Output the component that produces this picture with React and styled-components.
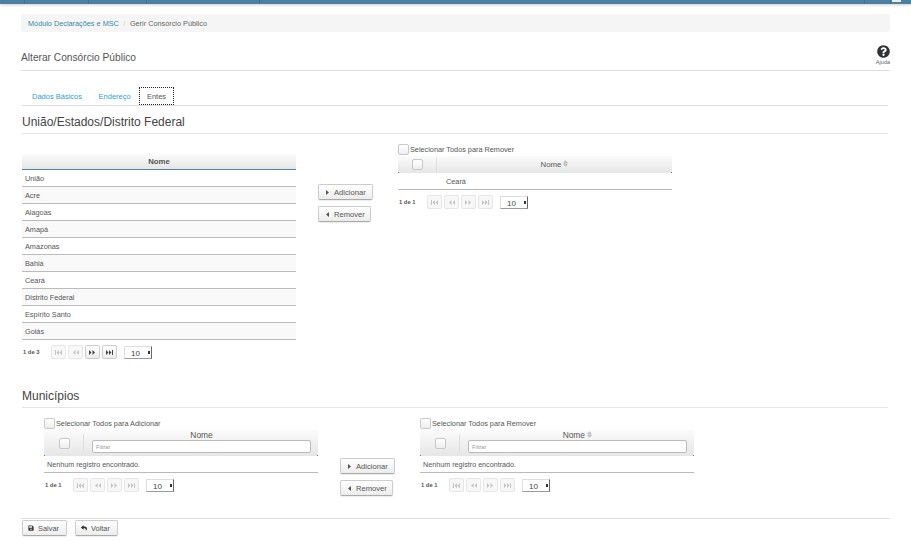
import styled, { createGlobalStyle } from 'styled-components'
import { FaQuestionCircle, FaSave, FaReply } from 'react-icons/fa'

const GlobalStyle = createGlobalStyle`
  html, body { margin:0; padding:0; background:#fff; }
  body { font-family:"Liberation Sans", Arial, sans-serif; color:#555; }
`

const ESTADOS = ['União','Acre','Alagoas','Amapá','Amazonas','Bahia','Ceará','Distrito Federal','Espírito Santo','Goiás']
const BAR_SEGMENTS = [25, 64, 58, 113, 605, 26]

const PagerIcon = ({ kind }) => {
  const paths = {
    first: 'M0 0h1v5H0zM4 0v5L1.5 2.5zM7 0v5L4.5 2.5z',
    prev: 'M3.5 0v5L1 2.5zM7 0v5L4.5 2.5z',
    next: 'M0 0v5l2.5-2.5zM3.5 0v5L6 2.5z',
    last: 'M0 0v5l2.5-2.5zM3 0v5l2.5-2.5zM6 0h1v5H6z',
  }
  return (
    <svg width="7" height="5" viewBox="0 0 7 5" fill="currentColor">
      <path d={paths[kind]} />
    </svg>
  )
}

const Pager = ({ label, active }) => (
  <PagerRow>
    <PageLabel>{label}</PageLabel>
    <PageBtns>
      <PageBtn><PagerIcon kind="first" /></PageBtn>
      <PageBtn><PagerIcon kind="prev" /></PageBtn>
      <PageBtn $active={active}><PagerIcon kind="next" /></PageBtn>
      <PageBtn $active={active}><PagerIcon kind="last" /></PageBtn>
    </PageBtns>
    <PageSize>10<Spinner /></PageSize>
  </PagerRow>
)

const Triangle = ({ left }) => (
  <Arrow width="3" height="5" viewBox="0 0 3 5" fill="#555">
    <path d={left ? 'M3 0v5L0 2.5z' : 'M0 0v5l3-2.5z'} />
  </Arrow>
)

const Actions = () => (
  <ActionCol>
    <ActionBtn $w={55}><Triangle />Adicionar</ActionBtn>
    <ActionBtn $w={53}><Triangle left />Remover</ActionBtn>
  </ActionCol>
)

const SortIcon = () => (
  <svg width="5" height="7" viewBox="0 0 5 7" fill="none" stroke="#999" strokeWidth="0.7">
    <path d="M.8 2.8L2.5.8l1.7 2zM.8 4.2l1.7 2 1.7-2z" />
  </svg>
)

const FilterTable = ({ selectLabel, sortable }) => (
  <Side $top={9}>
    <SelectAll><Check />{selectLabel}</SelectAll>
    <HeadRow $tall>
      <CheckCell $wide><Check /></CheckCell>
      <FilterCell>
        <HeadTitle $spaced>Nome {sortable && <SortIcon />}</HeadTitle>
        <FilterInput placeholder="Filtrar" />
      </FilterCell>
    </HeadRow>
    <EmptyRow>Nenhum registro encontrado.</EmptyRow>
    <Pager label="1 de 1" />
  </Side>
)

function App() {
  return (
    <Page>
      <GlobalStyle />
      <TopBar>
        {BAR_SEGMENTS.map((w, i) => <BarSegment key={i} $w={w} />)}
        <BarMark />
      </TopBar>
      <Breadcrumb>
        <a>Módulo Declarações e MSC</a>
        <Slash>/</Slash>
        <span>Gerir Consórcio Público</span>
      </Breadcrumb>

      <TitleBar>
        <h1>Alterar Consórcio Público</h1>
        <Help>
          <FaQuestionCircle size={13} color="#2f3338" />
          <span>Ajuda</span>
        </Help>
      </TitleBar>

      <Tabs>
        <Tab>Dados Básicos</Tab>
        <Tab>Endereço</Tab>
        <Tab $active>Entes</Tab>
      </Tabs>

      <SectionTitle>União/Estados/Distrito Federal</SectionTitle>
      <TransferRow>
        <Side $top={20}>
          <HeadRow $center>Nome</HeadRow>
          {ESTADOS.map((nome, i) => (
            <DataRow key={nome} $odd={i % 2 === 0}>{nome}</DataRow>
          ))}
          <Pager label="1 de 3" active />
        </Side>
        <ActionSlot><Actions /></ActionSlot>
        <Side $top={9}>
          <SelectAll><Check />Selecionar Todos para Remover</SelectAll>
          <HeadRow>
            <CheckCell><Check /></CheckCell>
            <HeadTitle>Nome <SortIcon /></HeadTitle>
          </HeadRow>
          <PickedRow>Ceará</PickedRow>
          <Pager label="1 de 1" />
        </Side>
      </TransferRow>

      <SectionTitle $second>Municípios</SectionTitle>
      <TransferRow $indent>
        <FilterTable selectLabel="Selecionar Todos para Adicionar" />
        <ActionSlot><Actions /></ActionSlot>
        <FilterTable selectLabel="Selecionar Todos para Remover" sortable />
      </TransferRow>

      <Footer>
        <FooterBtn $w={45}><FaSave size={6} color="#333" />Salvar</FooterBtn>
        <FooterBtn $w={43}><FaReply size={6} color="#333" />Voltar</FooterBtn>
      </Footer>
    </Page>
  )
}

export default App

const Page = styled.div`
  width:911px;
  height:556px;
  overflow:hidden;
`
const TopBar = styled.div`
  position:relative;
  height:4px;
  display:flex;
  background:#4a80a0;
  box-shadow:0 1px 3px rgba(0,0,0,.2);
`
const BarSegment = styled.span`
  width:${p => p.$w}px;
  border-right:1px solid #3f7091;
  box-sizing:border-box;
`
const BarMark = styled.span`
  position:absolute;
  right:10px;
  top:0;
  width:9px;
  height:2px;
  background:#e8eef2;
`
const Breadcrumb = styled.nav`
  margin:10px 21px 0;
  height:18px;
  width:869px;
  padding-left:7px;
  box-sizing:border-box;
  display:flex;
  align-items:center;
  background:#f5f5f5;
  border-radius:3px;
  font-size:7.3px;
  color:#666;
  a { color:#3a87ad; }
`
const Slash = styled.span`
  margin:0 4.5px;
  color:#ccc;
`
const TitleBar = styled.header`
  margin:12px 21px 0;
  width:869px;
  height:26px;
  border-bottom:1px solid #ddd;
  display:flex;
  justify-content:space-between;
  align-items:flex-start;
  h1 {
    margin:8px 0 0;
    font-size:10.2px;
    line-height:12px;
    font-weight:normal;
    color:#555;
  }
`
const Help = styled.div`
  display:flex;
  flex-direction:column;
  align-items:center;
  width:14px;
  padding-top:1px;
  span {
    font-size:5.6px;
    line-height:7px;
    color:#666;
    margin-top:1px;
  }
`
const Tabs = styled.div`
  margin:16px 23px 0 22px;
  height:18px;
  display:flex;
  padding-left:1.75px;
  border-bottom:1px solid #ddd;
`
const Tab = styled.a`
  height:18px;
  box-sizing:border-box;
  padding:0 ${p => (p.$active ? '8px' : '8.25px')};
  display:flex;
  align-items:center;
  font-size:7.5px;
  color:${p => (p.$active ? '#555' : '#2a9fd6')};
  outline:${p => (p.$active ? '1px dotted #222' : 'none')};
  outline-offset:-1px;
`
const SectionTitle = styled.h2`
  margin:${p => (p.$second ? '0' : '9px')} 23px 0 22px;
  padding-bottom:5px;
  height:13px;
  font-size:12px;
  line-height:14px;
  font-weight:normal;
  color:#444;
  border-bottom:1px solid #e5e5e5;
`
const TransferRow = styled.div`
  display:flex;
  margin-left:${p => (p.$indent ? '44px' : '22px')};
  height:${p => (p.$indent ? '110px' : '255px')};
`
const Side = styled.div`
  width:274px;
  margin-top:${p => p.$top}px;
`
const ActionSlot = styled.div`
  width:102px;
  padding-left:22px;
  box-sizing:border-box;
  margin-top:50px;
`
const ActionCol = styled.div`
  display:flex;
  flex-direction:column;
  align-items:flex-start;
  gap:6px;
`
const BaseBtn = styled.button`
  height:16px;
  padding:0;
  box-sizing:border-box;
  display:flex;
  align-items:center;
  font-family:inherit;
  font-size:7.6px;
  color:#555;
  background:linear-gradient(#fff,#ececec);
  border:1px solid #ccc;
  border-bottom-color:#aaa;
  border-radius:2px;
  box-shadow:0 1px 1px rgba(0,0,0,.08);
`
const ActionBtn = styled(BaseBtn)`
  width:${p => p.$w}px;
  padding-left:7px;
`
const Arrow = styled.svg`
  margin-right:5px;
  flex:none;
`
const FooterBtn = styled(BaseBtn)`
  width:${p => p.$w}px;
  padding-left:5px;
  gap:4px;
  font-size:7.4px;
`
const SelectAll = styled.label`
  display:flex;
  align-items:center;
  gap:1px;
  height:13px;
  font-size:7.3px;
  color:#555;
`
const Check = styled.span`
  display:inline-block;
  width:9px;
  height:9px;
  background:linear-gradient(#fff,#eee);
  border:1px solid #c8c8c8;
  border-radius:2px;
  flex:none;
`
const HeadRow = styled.div`
  position:relative;
  height:${p => (p.$tall ? '26px' : p.$center ? '16px' : '17px')};
  display:flex;
  align-items:${p => (p.$tall ? 'flex-start' : 'center')};
  justify-content:${p => (p.$center ? 'center' : 'flex-start')};
  font-size:7.8px;
  font-weight:${p => (p.$center ? 'bold' : 'normal')};
  color:#555;
  background:linear-gradient(#fbfbfb,#e6e6e6);
  border-bottom:${p => (p.$center ? '1px solid #4f86a6' : 'none')};
  box-sizing:border-box;
  /* the blue rule only survives at the corners of the checkbox tables */
  &::after {
    content:${p => (p.$center ? 'none' : '""')};
    position:absolute;
    left:0;
    right:0;
    bottom:0;
    height:1px;
    box-sizing:border-box;
    border-left:1px solid #4f86a6;
    border-right:1px solid #4f86a6;
  }
`
const CheckCell = styled.div`
  position:relative;
  width:${p => (p.$wide ? '40px' : '39px')};
  align-self:stretch;
  display:flex;
  align-items:center;
  justify-content:center;
  box-sizing:border-box;
  flex:none;
  &::after {
    content:"";
    position:absolute;
    right:0;
    top:${p => (p.$wide ? '4px' : '2px')};
    bottom:${p => (p.$wide ? '4px' : '2px')};
    width:1px;
    background:#ddd;
  }
`
const HeadTitle = styled.div`
  flex:1;
  text-align:center;
  font-size:${p => (p.$spaced ? '8.4px' : '7.8px')};
  line-height:10px;
`
const FilterCell = styled.div`
  flex:1;
  padding:0 7px 0 8px;
  display:flex;
  flex-direction:column;
  align-items:stretch;
`
const FilterInput = styled.input`
  height:13px;
  box-sizing:border-box;
  padding:0 3px;
  margin:0;
  font-family:inherit;
  font-size:5.6px;
  background:#fff;
  border:1px solid #bbb;
  border-radius:2px;
  &::placeholder { color:#999; }
`
const DataRow = styled.div`
  height:17px;
  box-sizing:border-box;
  padding-left:3px;
  display:flex;
  align-items:center;
  font-size:7.3px;
  color:#555;
  background:${p => (p.$odd ? '#fff' : '#f9f9f9')};
  border-bottom:1px solid #bbb;
`
const PickedRow = styled(DataRow)`
  padding-left:48px;
  background:#fff;
`
const EmptyRow = styled(DataRow)`
  background:#fff;
  font-size:7.2px;
`
const PagerRow = styled.div`
  display:flex;
  align-items:center;
  margin-top:5px;
  height:14px;
`
const PageLabel = styled.span`
  width:29px;
  padding-left:1px;
  box-sizing:border-box;
  font-size:5.8px;
  font-weight:bold;
  color:#555;
`
const PageBtns = styled.div`
  display:flex;
  gap:2px;
`
const PageBtn = styled.span`
  width:15px;
  height:14px;
  box-sizing:border-box;
  display:flex;
  align-items:center;
  justify-content:center;
  border:1px solid ${p => (p.$active ? '#ccc' : '#e6e6e6')};
  border-radius:2px;
  background:${p => (p.$active ? 'linear-gradient(#fff,#ececec)' : '#f7f7f7')};
  color:${p => (p.$active ? '#444' : '#c4c4c4')};
`
const PageSize = styled.span`
  position:relative;
  margin-left:7px;
  width:28px;
  height:13px;
  box-sizing:border-box;
  padding:1px 0 0 6px;
  font-size:8px;
  line-height:12px;
  color:#444;
  background:#fff;
  border:1px solid #ddd;
  border-right:1px solid #666;
  border-bottom:1px solid #999;
`
const Spinner = styled.i`
  position:absolute;
  right:1px;
  top:4px;
  width:2px;
  height:3px;
  background:#333;
`
const Footer = styled.footer`
  margin:0 21px;
  width:869px;
  border-top:1px solid #ddd;
  padding:1px 0 0 1px;
  box-sizing:border-box;
  display:flex;
  gap:8px;
`
